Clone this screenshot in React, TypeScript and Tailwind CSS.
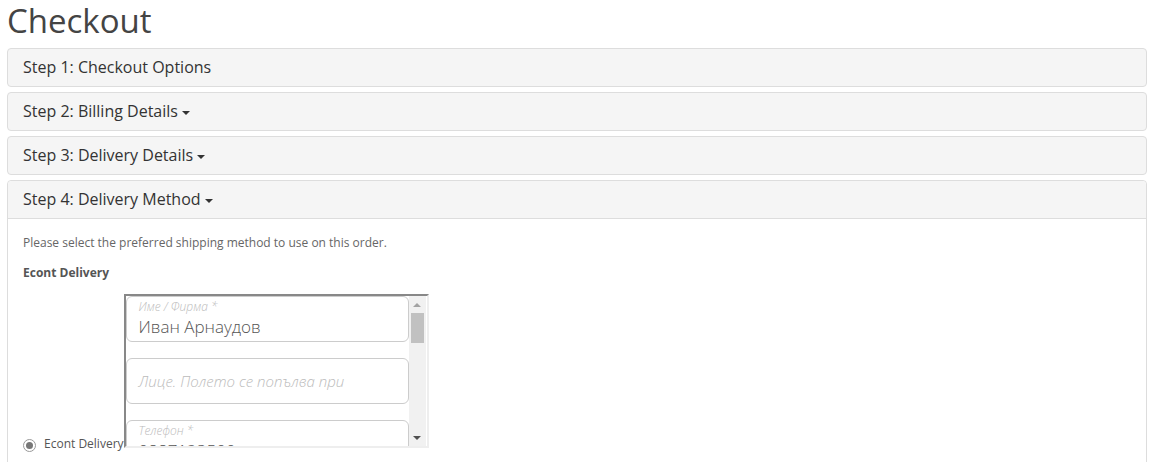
import React from 'react';

const steps = ['Step 1: Checkout Options', 'Step 2: Billing Details', 'Step 3: Delivery Details'];

function Caret() {
  return <span className="ml-1 inline-block h-0 w-0 border-x-4 border-t-4 border-x-transparent border-t-[#333] align-middle" />;
}

function Field({ label, value, placeholder }: { label?: string; value?: string; placeholder?: string }) {
  return (
    <div className={`flex h-[46px] shrink-0 flex-col rounded-md border border-[#ccc] bg-white px-3 ${placeholder ? 'justify-center' : 'pt-[3px]'}`}>
      {label && <div className="text-[12px] font-light italic leading-[14px] text-[#bbb]">{label}</div>}
      {value && <div className="mt-[2px] text-[17px] font-light leading-[22px] text-[#555]">{value}</div>}
      {placeholder && <div className="text-[15px] font-light italic leading-[22px] text-[#bbb]">{placeholder}</div>}
    </div>
  );
}

function Frame() {
  return (
    <span className="inline-block h-[154px] w-[305px] overflow-hidden border-2 border-b-[#eee] border-l-[#888] border-r-[#eee] border-t-[#888] bg-white align-baseline">
      <span className="flex h-full">
        <span className="flex w-[283px] flex-col gap-4">
          <Field label="Име / Фирма *" value="Иван Арнаудов" />
          <Field placeholder="Лице. Полето се попълва при" />
          <Field label="Телефон *" value="0887123500" />
        </span>
        <span className="flex w-[17px] flex-col items-center bg-[#f1f1f1]">
          <span className="flex h-[17px] items-center justify-center">
            <span className="h-0 w-0 border-x-4 border-b-4 border-x-transparent border-b-[#a3a3a3]" />
          </span>
          <span className="h-[30px] w-[13px] bg-[#c1c1c1]" />
          <span className="flex-1" />
          <span className="flex h-[17px] items-center justify-center">
            <span className="h-0 w-0 border-x-4 border-t-4 border-x-transparent border-t-[#505050]" />
          </span>
        </span>
      </span>
    </span>
  );
}

export default function App() {
  return (
    <div className="h-[462px] overflow-hidden bg-white px-[7px] font-['Open_Sans',sans-serif] text-[#333]">
      <h1 className="mb-[6px] text-[33px] leading-[42px] text-[#444]">Checkout</h1>
      <div className="flex w-[1140px] flex-col gap-[5px]">
        {steps.map((s, i) => (
          <div key={s} className="rounded border border-[#ddd] bg-[#f5f5f5] px-[15px] py-[9px] text-[16px] leading-[19px]">
            {s}
            {i > 0 && <Caret />}
          </div>
        ))}
        <div className="rounded border border-[#ddd] bg-white">
          <div className="rounded-t border-b border-[#ddd] bg-[#f5f5f5] px-[15px] py-[9px] text-[16px] leading-[19px]">
            Step 4: Delivery Method
            <Caret />
          </div>
          <div className="h-[300px] p-[15px] text-[12px] text-[#666]">
            <p className="mb-[12px] leading-[18px]">Please select the preferred shipping method to use on this order.</p>
            <p className="mb-[12px] font-bold leading-[18px] text-[#555]">Econt Delivery</p>
            <label className="block leading-[18px]">
              <span className="relative top-[1px] mr-[8px] inline-flex h-[13px] w-[13px] items-center justify-center rounded-full border border-[#999] bg-white">
                <span className="h-[7px] w-[7px] rounded-full bg-[#777]" />
              </span>
              <span className="text-[#555]">Econt Delivery</span>
              <Frame />
            </label>
          </div>
        </div>
      </div>
    </div>
  );
}
